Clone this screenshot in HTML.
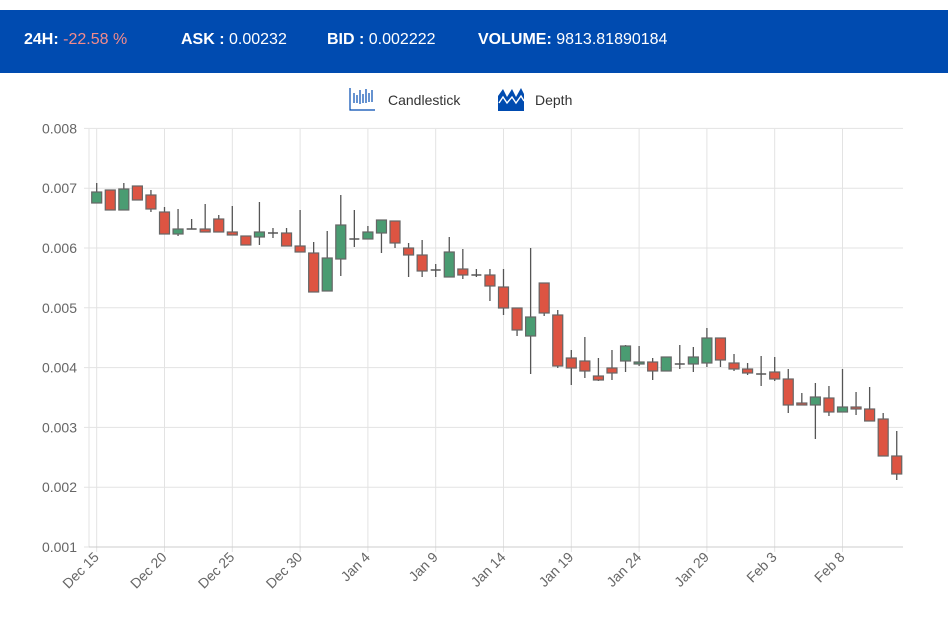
<!DOCTYPE html>
<html><head><meta charset="utf-8"><style>
body{margin:0;width:948px;height:622px;background:#fff;font-family:"Liberation Sans",sans-serif;overflow:hidden;position:relative}
.hdr{position:absolute;left:0;top:10px;width:948px;height:63px;background:#004bb0;color:#fff;font-size:16px}
.hdr span{position:absolute;top:21px;white-space:nowrap}
.hdr b{font-weight:bold}
.neg{color:#f28b8b}
</style></head><body>
<div class="hdr">
<span style="left:24px"><b>24H:</b> <span class="neg" style="position:static">-22.58 %</span></span>
<span style="left:181px"><b>ASK :</b> 0.00232</span>
<span style="left:327px"><b>BID :</b> 0.002222</span>
<span style="left:478px"><b>VOLUME:</b> 9813.81890184</span>
</div>
<svg id="c" width="948" height="622" style="position:absolute;left:0;top:0" font-family="Liberation Sans, sans-serif"></svg>
<script>
var s='';
s+='<g stroke="#004bb0" fill="none" stroke-width="1.2"><path d="M350 88V110H375"/><path d="M354 93v10M357 95v8M360 90v14M363 94v9M366 89v14M369 93v9M372 90v12"/></g>';
s+='<text x="388" y="105" font-size="14" fill="#333">Candlestick</text>';
s+='<path d="M498 111V96l5-7 4 8 5-8 4 8 5-9 3 6V111Z" fill="#004bb0"/><path d="M499 103l4-6 4 6 5-6 4 6 5-7 3 5" stroke="#fff" stroke-width="1.4" fill="none"/>';
s+='<text x="535" y="105" font-size="14" fill="#333">Depth</text>';
for(var k=1;k<=8;k++){var y=547-(k-1)*59.8;s+='<line x1="84" x2="903" y1="'+y+'" y2="'+y+'" stroke="#e3e3e3"/>';s+='<text x="77" y="'+(y+5)+'" font-size="14" fill="#666" text-anchor="end">0.00'+k+'</text>';}
var labs=['Dec 15','Dec 20','Dec 25','Dec 30','Jan 4','Jan 9','Jan 14','Jan 19','Jan 24','Jan 29','Feb 3','Feb 8'];
for(var i=0;i<12;i++){var x=96.7+67.8*i;s+='<line x1="'+x+'" x2="'+x+'" y1="129" y2="552" stroke="#e3e3e3"/>';s+='<text transform="translate('+(x+3)+',558) rotate(-45)" font-size="14" fill="#666" text-anchor="end">'+labs[i]+'</text>';}
s+='<line x1="89" x2="89" y1="129" y2="547" stroke="#e3e3e3"/><line x1="89" x2="903" y1="547" y2="547" stroke="#ccc"/>';
var d=[[192,203,183,203,'g'],[190,210,190,210,'r'],[189,210,183,210,'g'],[186,200,186,200,'r'],[195,209,190,212,'r'],[212,234,207,234,'r'],[229,234,209,236,'g'],[229,229,219,229,'d'],[229,232,204,232,'r'],[219,232,215,232,'r'],[232,235,206,235,'r'],[236,245,236,245,'r'],[232,237,202,245,'g'],[233,233,228,238,'d'],[233,246,228,246,'r'],[246,252,210,252,'r'],[253,292,242,292,'r'],[258,291,231,291,'g'],[225,259,195,276,'g'],[239,239,210,247,'d'],[232,239,226,239,'g'],[220,233,220,253,'g'],[221,243,221,248,'r'],[248,255,243,277,'r'],[255,271,240,277,'r'],[270,270,264,277,'d'],[252,277,237,277,'g'],[269,275,249,279,'r'],[275,275,269,277,'d'],[275,286,269,301,'r'],[287,308,269,315,'r'],[308,330,308,336,'r'],[317,336,248,374,'g'],[283,313,283,316,'r'],[315,366,310,368,'r'],[358,368,350,385,'r'],[361,371,337,378,'r'],[376,380,358,381,'r'],[368,373,350,380,'r'],[346,361,345,372,'g'],[362,364,346,366,'g'],[362,371,358,380,'r'],[357,371,357,371,'g'],[364,364,345,369,'d'],[357,364,347,372,'g'],[338,363,328,367,'g'],[338,360,338,367,'r'],[363,369,354,371,'r'],[369,373,363,375,'r'],[374,374,356,386,'d'],[372,379,357,381,'r'],[379,405,369,413,'r'],[403,405,393,405,'r'],[397,405,383,439,'g'],[398,412,386,416,'r'],[407,412,369,412,'g'],[407,409,392,415,'r'],[409,421,387,421,'r'],[419,456,413,456,'r'],[456,474,431,480,'r']];
for(var i=0;i<d.length;i++){var x=96.7+13.56*i,c=d[i];
s+='<line x1="'+x+'" x2="'+x+'" y1="'+c[2]+'" y2="'+c[3]+'" stroke="#555" stroke-width="1.3"/>';
if(c[4]=='d'){s+='<line x1="'+(x-5)+'" x2="'+(x+5)+'" y1="'+c[0]+'" y2="'+c[0]+'" stroke="#555" stroke-width="1.5"/>';}
else{var h=Math.max(c[1]-c[0],2);s+='<rect x="'+(x-5)+'" y="'+c[0]+'" width="10" height="'+h+'" fill="'+(c[4]=='g'?'#4a9c72':'#dd5442')+'" stroke="#666" stroke-width="1.2"/>';}}
document.getElementById('c').innerHTML=s;
</script>
</body></html>
